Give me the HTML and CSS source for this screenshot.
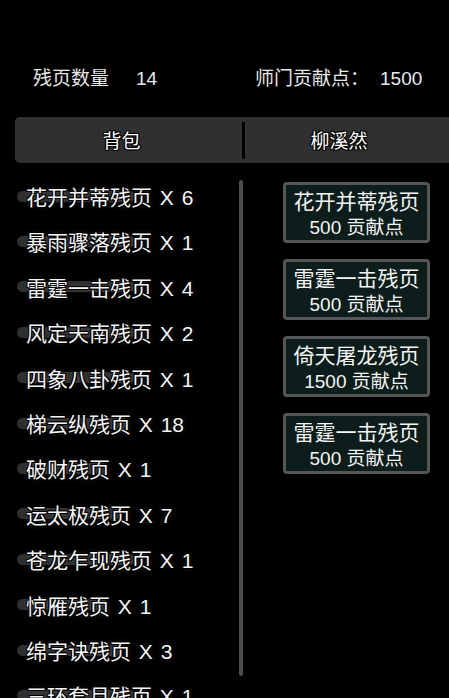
FILE: index.html
```html
<!DOCTYPE html>
<html lang="zh">
<head>
<meta charset="utf-8">
<link rel="stylesheet" href="styles.css">
</head>
<body>
<div class="page">
  <div class="header">
    <div class="stat stat-left"><span class="label">残页数量</span><span class="num">14</span></div>
    <div class="stat stat-right"><span class="label">师门贡献点：</span><span class="num">1500</span></div>
  </div>
  <div class="tabs">
    <div class="tab tab-left">背包</div>
    <div class="tab-divider"></div>
    <div class="tab tab-right">柳溪然</div>
  </div>
  <div class="main">
    <div class="list">
      <div class="item"><span class="item-text">花开并蒂残页 X 6</span></div>
      <div class="item"><span class="item-text">暴雨骤落残页 X 1</span></div>
      <div class="item"><span class="item-text">雷霆一击残页 X 4</span></div>
      <div class="item"><span class="item-text">风定天南残页 X 2</span></div>
      <div class="item"><span class="item-text">四象八卦残页 X 1</span></div>
      <div class="item"><span class="item-text">梯云纵残页 X 18</span></div>
      <div class="item"><span class="item-text">破财残页 X 1</span></div>
      <div class="item"><span class="item-text">运太极残页 X 7</span></div>
      <div class="item"><span class="item-text">苍龙乍现残页 X 1</span></div>
      <div class="item"><span class="item-text">惊雁残页 X 1</span></div>
      <div class="item"><span class="item-text">绵字诀残页 X 3</span></div>
      <div class="item"><span class="item-text">三环套月残页 X 1</span></div>
    </div>
    <div class="scrollbar"></div>
    <div class="shop">
      <div class="shop-btn"><div class="btn-title">花开并蒂残页</div><div class="btn-cost">500 贡献点</div></div>
      <div class="shop-btn"><div class="btn-title">雷霆一击残页</div><div class="btn-cost">500 贡献点</div></div>
      <div class="shop-btn"><div class="btn-title">倚天屠龙残页</div><div class="btn-cost">1500 贡献点</div></div>
      <div class="shop-btn"><div class="btn-title">雷霆一击残页</div><div class="btn-cost">500 贡献点</div></div>
    </div>
  </div>
</div>
</body>
</html>
```

FILE: styles.css
```css
html {
  margin: 0;
  padding: 0;
  background: #000;
  overflow: hidden;
}
body {
  margin: 0;
  padding: 0;
  width: 449px;
  height: 698px;
  overflow: hidden;
  font-family: "Liberation Sans", "Noto Sans CJK SC", sans-serif;
  color: #f2f2f2;
}
.page {
  width: 449px;
  height: 698px;
  overflow: hidden;
}
.header {
  display: flex;
  padding-top: 67px;
  height: 24px;
  line-height: 24px;
  font-size: 19px;
  color: #e8e8e8;
}
.stat-left {
  display: flex;
  padding-left: 33px;
  width: 222px;
}
.stat-left .num {
  margin-left: 27px;
}
.stat-right {
  display: flex;
}
.stat-right .num {
  margin-left: 11px;
}
.tabs {
  display: flex;
  margin-top: 26px;
  margin-left: 15px;
  width: 460px;
  height: 46px;
  background: #303030;
  border-radius: 5px;
  align-items: center;
}
.tab {
  font-size: 19px;
  color: #fff;
  text-align: center;
  line-height: 46px;
  padding-top: 3px;
  text-shadow: 0 0 2px #000, 1px 1px 0 #000, -1px -1px 0 #000, 1px -1px 0 #000, -1px 1px 0 #000;
}
.tab-left {
  width: 213px;
  padding-right: 14px;
}
.tab-right {
  width: 188px;
}
.tab-divider {
  width: 3px;
  height: 37px;
  background: #000;
  border-radius: 1px;
}
.main {
  display: flex;
  margin-top: 12px;
}
.list {
  width: 239px;
  flex: none;
}
.item {
  height: 45.4px;
  line-height: 45.4px;
  font-size: 21px;
  padding-left: 26px;
  white-space: nowrap;
  word-spacing: 2px;
}
.item-text {
  position: relative;
  display: inline-block;
  color: #f4f4f4;
  text-shadow: 0 0 2px #000, 1px 1px 0 #000, -1px -1px 0 #000, 1px -1px 0 #000, -1px 1px 0 #000, 0 0 4px rgba(255,255,255,0.25);
}
.item-text::before {
  content: "";
  position: absolute;
  left: -9px;
  right: 35%;
  top: 50%;
  margin-top: -7px;
  height: 11px;
  border-radius: 6px;
  background: #2f2f2f;
  z-index: -1;
}
.scrollbar {
  flex: none;
  width: 4px;
  height: 496px;
  margin-top: 5px;
  background: #4e4e4e;
  border-radius: 2px;
}
.shop {
  display: flex;
  flex-direction: column;
  gap: 16px;
  padding-top: 7px;
  padding-left: 40px;
}
.shop-btn {
  box-sizing: border-box;
  width: 147px;
  height: 61px;
  border: 3px solid #555;
  border-radius: 4px;
  background: #0c1d1b;
  display: flex;
  flex-direction: column;
  align-items: center;
  justify-content: center;
  padding-top: 3px;
  color: #f4f4f4;
}
.btn-title {
  font-size: 21px;
  line-height: 26px;
}
.btn-cost {
  font-size: 19px;
  line-height: 25px;
}
```
